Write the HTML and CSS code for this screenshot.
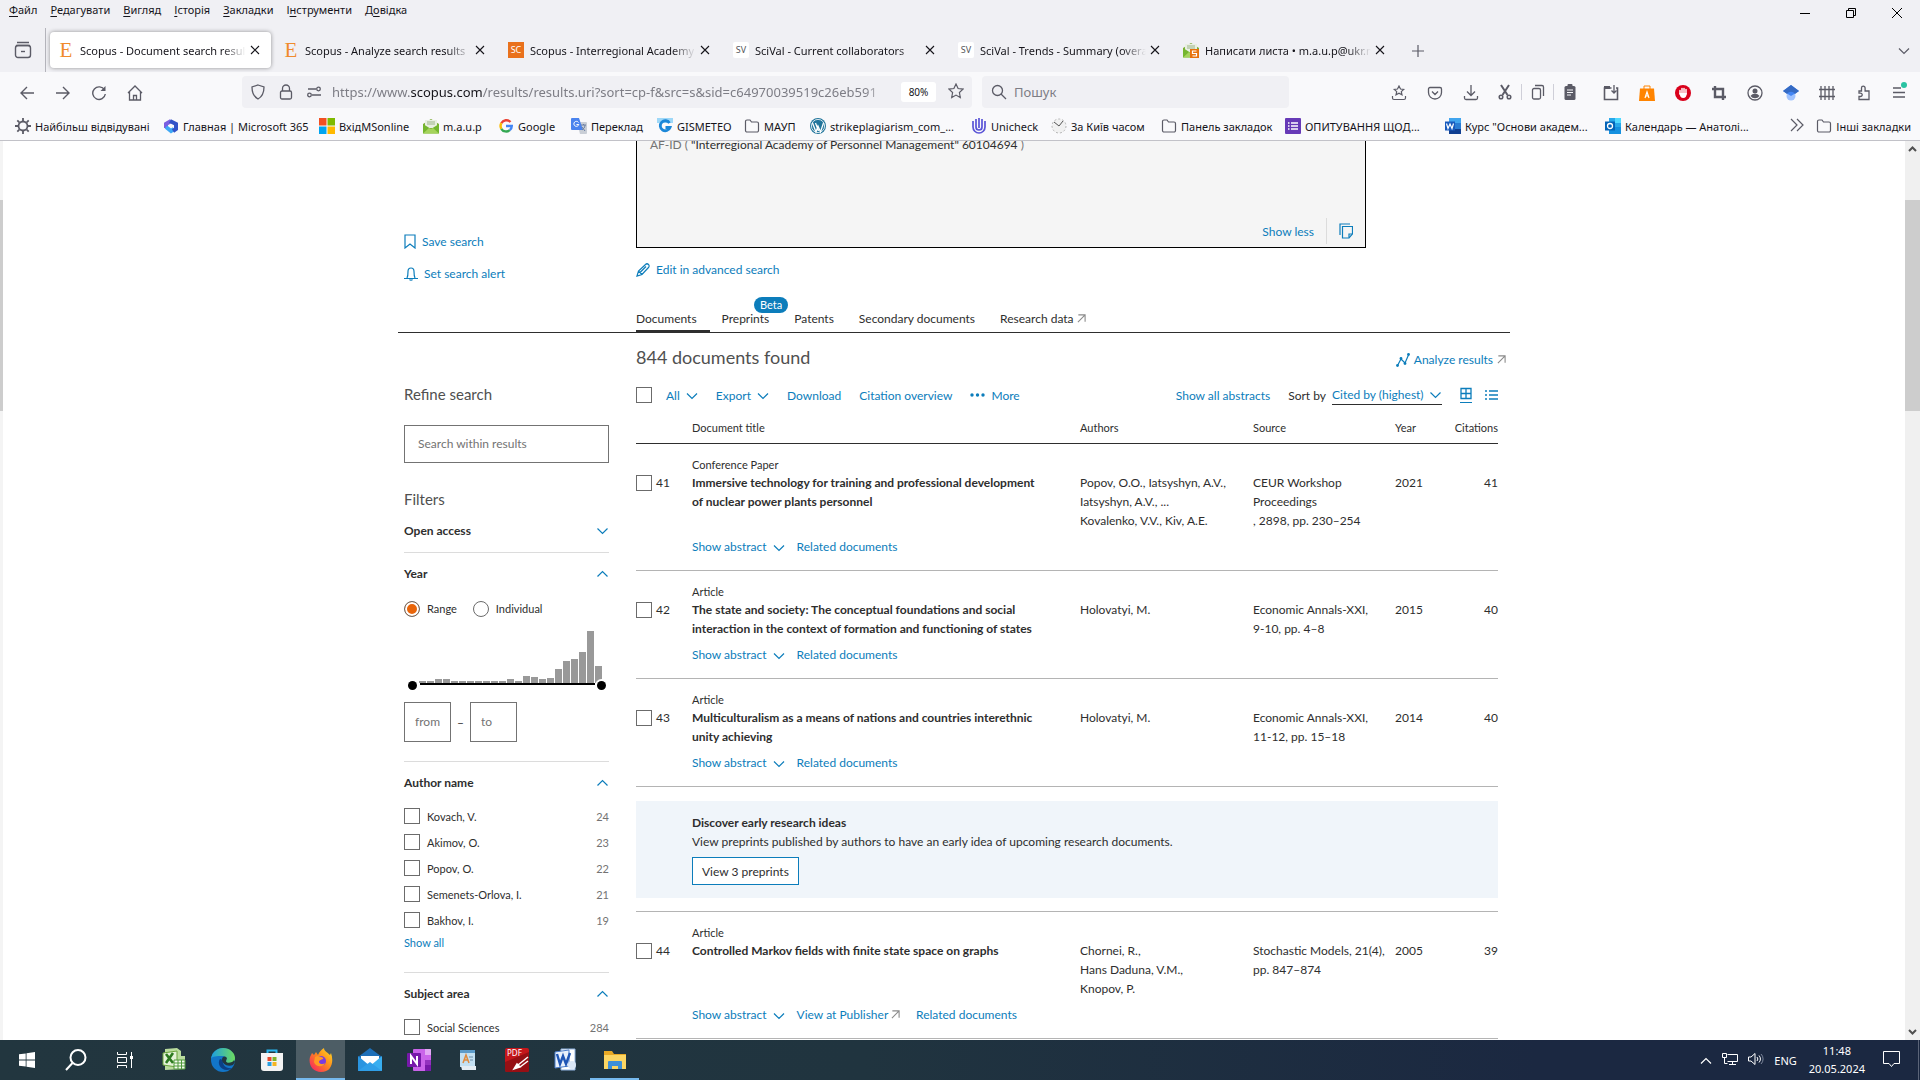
FILE: index.html
```html
<!DOCTYPE html>
<html lang="uk">
<head>
	<meta charset="UTF-8">
	<meta name="viewport" content="width=device-width, initial-scale=1.0">
	<title>Scopus - Document search results</title>
	<link rel="stylesheet" href="styles.css">
</head>
<body>
	<svg class="defs" width="0" height="0">
		<symbol id="chev" viewBox="0 0 12 8"><path d="M1 1.5l5 5 5-5" fill="none" stroke="currentColor" stroke-width="1.2"/></symbol>
		<symbol id="chev-up" viewBox="0 0 12 8"><path d="M1 6.5l5-5 5 5" fill="none" stroke="currentColor" stroke-width="1.2"/></symbol>
		<symbol id="ext" viewBox="0 0 10 10"><path d="M1.500 1h7.500v7.500M9 1L1 9" fill="none" stroke="#8a8a8a" stroke-width="1.2"/></symbol>
		<symbol id="close" viewBox="0 0 10 10"><path d="M1 1l8 8M9 1L1 9" fill="none" stroke="#15141a" stroke-width="1.1"/></symbol>
		<symbol id="folder" viewBox="0 0 16 16"><path d="M1.500 3.500a1.500 1.500 0 0 1 1.500-1.500h3l1.500 2H13a1.500 1.500 0 0 1 1.500 1.500v7A1.500 1.500 0 0 1 13 14H3a1.500 1.500 0 0 1-1.500-1.500z" fill="none" stroke="#5b5b66" stroke-width="1.2"/></symbol>
		<symbol id="mailbox" viewBox="0 0 16 16"><path d="M0 6l8-5 8 5v9H0z" fill="#7fae3a"/><path d="M2 2h12v8H2z" fill="#e9efe2"/><path d="M4 4h8M4 6h8" stroke="#9db58a"/><path d="M0 6l8 5 8-5v9.500H0z" fill="#74b62e"/><path d="M0 15.500l6-5.500 2 1 2-1 6 5.500z" fill="#a5d35c"/></symbol>
	</svg>

	<header class="browser">
		<div class="titlebar">
			<nav class="menu">
				<button><u>Ф</u>айл</button>
				<button><u>Р</u>едагувати</button>
				<button><u>В</u>игляд</button>
				<button><u>І</u>сторія</button>
				<button><u>З</u>акладки</button>
				<button>І<u>н</u>струменти</button>
				<button>Д<u>о</u>відка</button>
			</nav>
			<div class="win-buttons">
				<button aria-label="Згорнути"><svg width="12" height="12"><path d="M1 6.500h10" stroke="#000"/></svg></button>
				<button aria-label="Відновити"><svg width="12" height="12" fill="none" stroke="#000"><path d="M1.500 3.500h7v7h-7zM3.500 3.500v-2h7v7h-2"/></svg></button>
				<button aria-label="Закрити"><svg width="12" height="12"><path d="M1 1l10 10M11 1L1 11" stroke="#000"/></svg></button>
			</div>
		</div>

		<div class="tabstrip">
			<button class="recent" aria-label="Огляд"><svg width="18" height="18" fill="none" stroke="#5b5b66" stroke-width="1.400"><path d="M3 1.500h12M2 4.500h14"/><rect x="1.500" y="4.500" width="15" height="12" rx="2.500"/><path d="M7 10.500h4"/></svg></button>
			<div class="tab active"><span class="fav elsevier">E</span><span class="tab-title">Scopus - Document search results</span><button aria-label="Закрити"><svg width="10" height="10"><use href="#close"/></svg></button></div>
			<div class="tab"><span class="fav elsevier">E</span><span class="tab-title">Scopus - Analyze search results</span><button aria-label="Закрити"><svg width="10" height="10"><use href="#close"/></svg></button></div>
			<div class="tab"><span class="fav sc">SC</span><span class="tab-title">Scopus - Interregional Academy</span><button aria-label="Закрити"><svg width="10" height="10"><use href="#close"/></svg></button></div>
			<div class="tab"><span class="fav sv">SV</span><span class="tab-title">SciVal - Current collaborators</span><button aria-label="Закрити"><svg width="10" height="10"><use href="#close"/></svg></button></div>
			<div class="tab"><span class="fav sv">SV</span><span class="tab-title">SciVal - Trends - Summary (overall)</span><button aria-label="Закрити"><svg width="10" height="10"><use href="#close"/></svg></button></div>
			<div class="tab"><span class="fav"><svg width="16" height="16" viewBox="0 0 16 16"><use href="#mailbox"/><path d="M7 7h9v9H7z" fill="#e8720c"/><path d="M13.500 9h-4v2.500h4V14h-4" fill="none" stroke="#fff" stroke-width="1.200"/></svg></span><span class="tab-title">Написати листа • m.a.u.p@ukr.net</span><button aria-label="Закрити"><svg width="10" height="10"><use href="#close"/></svg></button></div>
			<button class="new-tab" aria-label="Нова вкладка"><svg width="12" height="12"><path d="M6 0v12M0 6h12" stroke="#5b5b66" stroke-width="1.200"/></svg></button>
			<button class="all-tabs" aria-label="Усі вкладки"><svg width="12" height="8" color="#5b5b66"><use href="#chev"/></svg></button>
		</div>

		<div class="navbar">
			<button class="tool" aria-label="Назад"><svg width="16" height="16" fill="none" stroke="#5b5b66" stroke-width="1.400"><path d="M15 8H2M8 2L2 8l6 6"/></svg></button>
			<button class="tool" aria-label="Вперед"><svg width="16" height="16" fill="none" stroke="#5b5b66" stroke-width="1.400"><path d="M1 8h13M8 2l6 6-6 6"/></svg></button>
			<button class="tool" aria-label="Оновити"><svg width="16" height="16" fill="none" stroke="#5b5b66" stroke-width="1.400"><path d="M13.500 5A6.300 6.300 0 1 0 14.300 9"/><path d="M14.500 1v5h-5z" fill="#5b5b66" stroke="none"/></svg></button>
			<button class="tool" aria-label="Додому"><svg width="16" height="16" fill="none" stroke="#5b5b66" stroke-width="1.300"><path d="M1 8l7-7 7 7M2.500 7v8h11V7M6.500 15v-4.500h3V15"/></svg></button>
			<div class="urlbar">
				<svg width="16" height="16" fill="none" stroke="#5b5b66" stroke-width="1.300"><path d="M8 1l6 2c0 6-1.500 9.500-6 12C3.500 12.500 2 9 2 3z"/></svg>
				<svg width="16" height="16" fill="none" stroke="#5b5b66" stroke-width="1.300"><rect x="2.500" y="7" width="11" height="8" rx="1.500"/><path d="M4.500 7V4.500a3.500 3.500 0 0 1 7 0V7"/></svg>
				<svg width="16" height="16" fill="none" stroke="#5b5b66" stroke-width="1.300"><path d="M2 5h8M6 11h9"/><circle cx="12.500" cy="5" r="1.800"/><circle cx="3.500" cy="11" r="1.800"/></svg>
				<div class="url" role="textbox" aria-label="Адреса" contenteditable="true" spellcheck="false">https://www.<span class="domain">scopus.com</span>/results/results.uri?sort=cp-f&amp;src=s&amp;sid=c64970039519c26eb591</div>
				<button class="zoom">80%</button>
				<button class="star" aria-label="Додати до закладок"><svg width="16" height="16" fill="none" stroke="#5b5b66" stroke-width="1.200"><path d="M8 1l2.100 4.500 4.900.6-3.600 3.400.9 5L8 12.100l-4.300 2.400.9-5L1 6.100l4.900-.6z"/></svg></button>
			</div>
			<label class="searchbar">
				<svg width="16" height="16" fill="none" stroke="#5b5b66" stroke-width="1.300"><circle cx="6.500" cy="6.500" r="5"/><path d="M10 10l5 5"/></svg>
				<input type="text" placeholder="Пошук" aria-label="Пошук">
			</label>
			<div class="toolbar-right">
				<button class="tool" aria-label="Закладки"><svg width="16" height="16" fill="none" stroke="#5b5b66" stroke-width="1.200"><path d="M8 1l1.500 3 3.200.4-2.400 2.200.7 3.300L8 8.300 5 9.900l.7-3.300-2.400-2.200L6.500 4zM1.500 11v2a1.500 1.500 0 0 0 1.500 1.500h10a1.500 1.500 0 0 0 1.500-1.500v-2"/></svg></button>
				<button class="tool" aria-label="Pocket"><svg width="16" height="16" fill="none" stroke="#5b5b66" stroke-width="1.300"><path d="M3 2.500h10A1.500 1.500 0 0 1 14.500 4v3.500a6.500 6.500 0 0 1-13 0V4A1.500 1.500 0 0 1 3 2.500zM5 6.500l3 3 3-3"/></svg></button>
				<button class="tool" aria-label="Завантаження"><svg width="16" height="16" fill="none" stroke="#5b5b66" stroke-width="1.300"><path d="M8 0v10M4 6.500L8 10.500l4-4M1.500 11v2a1.500 1.500 0 0 0 1.500 1.500h10a1.500 1.500 0 0 0 1.500-1.500v-2"/></svg></button>
				<div class="edit-group">
					<button aria-label="Вирізати"><svg width="16" height="16" fill="none" stroke="#5b5b66" stroke-width="2"><path d="M4 1l6.500 10M12 1L5.500 11"/><circle cx="4" cy="13" r="1.800" stroke-width="1.500"/><circle cx="12" cy="13" r="1.800" stroke-width="1.500"/></svg></button>
					<button aria-label="Копіювати"><svg width="16" height="16" fill="none" stroke="#5b5b66" stroke-width="1.300"><rect x="2.500" y="4.500" width="8" height="10.500" rx="1.500"/><path d="M5 1.500h7A1.500 1.500 0 0 1 13.500 3v9"/></svg></button>
					<button aria-label="Вставити"><svg width="16" height="16"><rect x="2.500" y="2" width="11" height="14" rx="1.500" fill="#5b5b66"/><rect x="5.500" y="0" width="5" height="4" rx="1" fill="#5b5b66"/><path d="M5 6h6M5 8.500h6M5 11h4" stroke="#f9f9fb"/></svg></button>
				</div>
				<button class="tool" aria-label="Знімки"><svg width="16" height="16" fill="none" stroke="#5b5b66" stroke-width="1.600"><path d="M8.500 3H1.500v11.500h13V3H13"/><path d="M1 2.500h6" stroke-width="3"/><path d="M11 0v8M8.500 5.500L11 8l2.500-2.500" stroke-width="1.300"/></svg></button>
				<button class="tool" aria-label="Розширення A"><svg width="16" height="16"><path d="M1 3.500h14L16 16H0z" fill="#ff8400"/><path d="M5 4V1h6v3" fill="none" stroke="#ff8400"/><path d="M6 13l2-6 2 6M6.700 11h2.600" fill="none" stroke="#fff" stroke-width="1.200"/></svg></button>
				<button class="tool" aria-label="Блокувальник"><svg width="16" height="16"><circle cx="8" cy="8" r="8" fill="#d9001b"/><path d="M5 9V5.500M7 8V3.500M9 8V3.500M11 9V4.500" stroke="#fff" stroke-width="1.500" stroke-linecap="round"/><path d="M4.300 8h7.500c0 3-1.300 5-3.500 5-2.500 0-3.500-2-4-5z" fill="#fff"/></svg></button>
				<button class="tool" aria-label="Знімок екрана"><svg width="16" height="16" fill="none" stroke="#5b5b66" stroke-width="2.400"><path d="M4 1v11h11M1 4h11v11"/></svg></button>
				<button class="tool" aria-label="Обліковий запис"><svg width="16" height="16"><circle cx="8" cy="8" r="7" fill="none" stroke="#5b5b66" stroke-width="1.300"/><circle cx="8" cy="6" r="2.500" fill="#5b5b66"/><path d="M3.500 11a5 4 0 0 1 9 0 5.500 5.500 0 0 1-9 0z" fill="#5b5b66"/></svg></button>
				<button class="tool" aria-label="Scholar"><svg width="16" height="16"><circle cx="8" cy="11" r="4.500" fill="#a0c3ff"/><path d="M8 0l8 6-8 5-8-5z" fill="#4285f4"/><path d="M8 0l8 6-4 3c-2-3-6-3-8 0L0 6z" fill="#356ac3"/></svg></button>
				<button class="tool" aria-label="Паркан"><svg width="16" height="16" fill="none" stroke="#5b5b66" stroke-width="1.300"><path d="M2 1v14M6 1v14M10 1v14M14 1v14M0 4.500h16M0 11.500h16"/></svg></button>
				<button class="tool" aria-label="Розширення"><svg width="16" height="16" fill="none" stroke="#5b5b66" stroke-width="1.300"><path d="M4 6h2.500V3a1.800 1.800 0 0 1 3.600 0v3H14v8.500H4v-3h1.500a1.700 1.700 0 0 0 0-3.400H4z"/></svg></button>
				<button class="tool" aria-label="Меню"><svg width="16" height="20"><path d="M2 6h8M2 10.500h12M2 15h12" stroke="#5b5b66" stroke-width="1.300"/><circle cx="13" cy="3" r="3" fill="#2ac3a2"/></svg></button>
			</div>
		</div>

		<nav class="bookmarks">
			<a href="#"><svg width="16" height="16"><circle cx="8" cy="8" r="4.500" fill="none" stroke="#5b5b66" stroke-width="1.800"/><path d="M8 0v3M8 13v3M0 8h3M13 8h3M2.300 2.300l2 2M11.700 11.700l2 2M2.300 13.700l2-2M11.700 4.300l2-2" stroke="#5b5b66" stroke-width="1.800"/></svg>Найбільш відвідувані</a>
			<a href="#"><svg width="16" height="16" fill="none" stroke-width="4"><path d="M8 3L3 6v4" stroke="#7b5fe0"/><path d="M3 9l5 4 3-2" stroke="#3fa8f5"/><path d="M7 3l6 3v5l-3 2" stroke="#3253c8"/></svg>Главная | Microsoft 365</a>
			<a href="#"><svg width="16" height="16"><path d="M0 0h7.500v7.500H0z" fill="#f25022"/><path d="M8.500 0H16v7.500H8.500z" fill="#7fba00"/><path d="M0 8.500h7.500V16H0z" fill="#00a4ef"/><path d="M8.500 8.500H16V16H8.500z" fill="#ffb900"/></svg>ВхідMSonline</a>
			<a href="#"><svg width="16" height="16"><use href="#mailbox"/></svg>m.a.u.p</a>
			<a href="#"><svg width="16" height="16" fill="none" stroke-width="2.400"><path d="M12.500 4A5.700 5.700 0 0 0 3.300 5.200" stroke="#ea4335"/><path d="M3.300 5.200a5.700 5.700 0 0 0 0 5.600" stroke="#fbbc05"/><path d="M3.300 10.800a5.700 5.700 0 0 0 8.500 1.400" stroke="#34a853"/><path d="M11.800 12.200A5.700 5.700 0 0 0 13.800 8H8" stroke="#4285f4"/></svg>Google</a>
			<a href="#"><svg width="16" height="16"><path d="M6 4h9a1 1 0 0 1 1 1v10a1 1 0 0 1-1 1H9z" fill="#c9ced6"/><path d="M1 0h7l4 12H1a1 1 0 0 1-1-1V1a1 1 0 0 1 1-1z" fill="#4a83ee"/><path d="M7.500 4.500a2.500 2.500 0 1 0 .3 2H5.500" fill="none" stroke="#fff"/><path d="M10 7h5M12.500 6v1M14 7c0 3-2 4-3 5M11 9l3 4" fill="none" stroke="#6b7fa3"/></svg>Переклад</a>
			<a href="#"><svg width="16" height="16"><path d="M0 0h16v5H0z" fill="#9ed8f8"/><path d="M12.500 5A5 5 0 1 0 13 9.500H8.500" fill="none" stroke="#1c87d8" stroke-width="2.800"/></svg>GISMETEO</a>
			<a href="#"><svg width="16" height="16"><use href="#folder"/></svg>МАУП</a>
			<a href="#"><svg width="16" height="16"><circle cx="8" cy="8" r="8" fill="#21759b"/><circle cx="8" cy="8" r="6.600" fill="none" stroke="#fff" stroke-width=".8"/><path d="M2.500 5l3.500 9L8 8l2.500 6L13.500 5M5.500 5l3 8" fill="none" stroke="#fff" stroke-width="1.300"/></svg>strikeplagiarism_com_...</a>
			<a href="#"><svg width="16" height="16" fill="none" stroke="#5a54d6" stroke-width="1.700"><path d="M2 3v6a6 6 0 0 0 12 0V3M5 1v8a3 3 0 0 0 6 0V1M8 0v10"/></svg>Unicheck</a>
			<a href="#"><svg width="16" height="16"><circle cx="8" cy="8" r="7" fill="#f1f1f1" stroke="#b5b5b5" stroke-dasharray="2 2"/><path d="M3 4l5 4 4-5" fill="none" stroke="#555"/></svg>За Київ часом</a>
			<a href="#"><svg width="16" height="16"><use href="#folder"/></svg>Панель закладок</a>
			<a href="#"><svg width="16" height="16"><rect width="16" height="16" rx="1" fill="#673ab7"/><path d="M6 5h7M6 8h7M6 11h7M3 5h1.500M3 8h1.500M3 11h1.500" stroke="#fff" stroke-width="1.500"/></svg>ОПИТУВАННЯ ЩОД...</a>
			<a href="#"><svg width="16" height="16"><path d="M4 0h12v16H4z" fill="#2b7cd3"/><path d="M4 0h12v5H4z" fill="#41a5ee"/><path d="M4 11h12v5H4z" fill="#103f91"/><rect y="3.500" width="10" height="9" fill="#185abd"/><path d="M1.500 5.500l1.500 5L5 6l2 4.500 1.500-5" fill="none" stroke="#fff" stroke-width="1.200"/></svg>Курс "Основи академ...</a>
			<a href="#"><svg width="16" height="16"><path d="M4 0h12v12H4z" fill="#28a8ea"/><path d="M10 0h6v5h-6z" fill="#50d9ff"/><path d="M4 9l12 0v7H4z" fill="#1490df"/><rect y="3.500" width="10" height="9" fill="#0364b8"/><circle cx="5" cy="8" r="2.500" fill="none" stroke="#fff" stroke-width="1.300"/></svg>Календарь — Анатолі...</a>
			<button aria-label="Ще закладки"><svg width="14" height="14" fill="none" stroke="#5b5b66" stroke-width="1.200"><path d="M1 1l6 6-6 6M7 1l6 6-6 6"/></svg></button>
			<a href="#"><svg width="16" height="16"><use href="#folder"/></svg>Інші закладки</a>
		</nav>
	</header>

	<main class="viewport">
		<div class="edge"><span class="thumb"></span></div>
		<div class="scroll-area">
			<div class="page" lang="en">
				<section class="query">
					<div class="query-actions">
						<a href="#"><svg width="12" height="15" fill="none" stroke="currentColor" stroke-width="1.200"><path d="M1 1h10v13l-5-4-5 4z"/></svg>Save search</a>
						<a href="#"><svg width="14" height="15" fill="none" stroke="currentColor" stroke-width="1.200"><path d="M0 12.500h14M3 12c1-2 1-4 1-6.500a3 3.500 0 0 1 6 0c0 2.500 0 4.500 1 6.500M5.500 13.500a1.600 1 0 0 0 3 0"/></svg>Set search alert</a>
					</div>
					<div class="query-main">
						<div class="query-box">
							<p><span>AF-ID ( </span>"Interregional Academy of Personnel Management" 60104694<span> )</span></p>
							<div class="query-foot">
								<button class="link">Show less</button>
								<button class="link copy" aria-label="Copy query"><svg width="14" height="16" fill="none" stroke="currentColor" stroke-width="1.200"><path d="M1 12V1h10"/><path d="M3.500 3.500h10v7.500l-3.500 4H3.500z"/><path d="M13 11h-3v3.500"/></svg></button>
							</div>
						</div>
						<a href="#" class="edit"><svg width="14" height="14" fill="none" stroke="currentColor" stroke-width="1.200"><path d="M1 13l1.500-5L9.500 1.500a1.800 1.800 0 0 1 3 3L6 11.500zM4 9.500l6-6M2.500 8l3.500 3.500"/></svg>Edit in advanced search</a>
					</div>
				</section>

				<nav class="doc-tabs">
					<a href="#" class="current">Documents</a>
					<a href="#">Preprints<span class="beta">Beta</span></a>
					<a href="#">Patents</a>
					<a href="#">Secondary documents</a>
					<a href="#">Research data <svg width="9" height="9"><use href="#ext"/></svg></a>
				</nav>

				<div class="columns">
					<aside class="sidebar">
						<h2>Refine search</h2>
						<input class="within" type="text" placeholder="Search within results" aria-label="Search within results">
						<h2>Filters</h2>

						<section class="facet">
							<button class="facet-head">Open access <svg width="13" height="8"><use href="#chev"/></svg></button>
						</section>

						<section class="facet">
							<button class="facet-head">Year <svg width="13" height="8"><use href="#chev-up"/></svg></button>
							<div class="radios">
								<label><input type="radio" name="year" checked>Range</label>
								<label><input type="radio" name="year">Individual</label>
							</div>
							<div class="histogram">
								<i style="height:2px"></i><i style="height:2px"></i><i style="height:4px"></i><i style="height:4px"></i><i style="height:2px"></i><i style="height:2px"></i><i style="height:2px"></i><i style="height:2px"></i><i style="height:2px"></i><i style="height:2px"></i><i style="height:2px"></i><i style="height:4px"></i><i style="height:2px"></i><i style="height:7px"></i><i style="height:6px"></i><i style="height:4px"></i><i style="height:5px"></i><i style="height:14px"></i><i style="height:22px"></i><i style="height:24px"></i><i style="height:31px"></i><i style="height:52px"></i><i style="height:17px"></i>
							</div>
							<div class="slider">
								<input type="range" min="0" max="22" value="0" aria-label="From year">
								<input type="range" min="0" max="22" value="22" aria-label="To year">
							</div>
							<div class="from-to">
								<input type="text" placeholder="from" aria-label="From">
								<span>–</span>
								<input type="text" placeholder="to" aria-label="To">
							</div>
						</section>

						<section class="facet">
							<button class="facet-head">Author name <svg width="13" height="8"><use href="#chev-up"/></svg></button>
							<ul>
								<li><label><input type="checkbox">Kovach, V.</label><span>24</span></li>
								<li><label><input type="checkbox">Akimov, O.</label><span>23</span></li>
								<li><label><input type="checkbox">Popov, O.</label><span>22</span></li>
								<li><label><input type="checkbox">Semenets-Orlova, I.</label><span>21</span></li>
								<li><label><input type="checkbox">Bakhov, I.</label><span>19</span></li>
							</ul>
							<a href="#" class="show-all">Show all</a>
						</section>

						<section class="facet">
							<button class="facet-head">Subject area <svg width="13" height="8"><use href="#chev-up"/></svg></button>
							<ul>
								<li><label><input type="checkbox">Social Sciences</label><span>284</span></li>
							</ul>
						</section>
					</aside>

					<section class="results">
						<div class="results-head">
							<h1>844 documents found</h1>
							<a href="#" class="analyze"><svg width="14" height="14" fill="none" stroke="currentColor" stroke-width="1.200"><path d="M1.500 12.500L5 6l4 4 3.500-8"/><g fill="currentColor" stroke="none"><circle cx="1.500" cy="12.500" r="1.400"/><circle cx="5" cy="5.500" r="1.400"/><circle cx="9" cy="10.500" r="1.400"/><circle cx="12.500" cy="1.500" r="1.400"/></g></svg>Analyze results <svg class="ext" width="9" height="9"><use href="#ext"/></svg></a>
						</div>
						<div class="actions">
							<input type="checkbox" aria-label="Select all">
							<button class="link">All <svg width="12" height="8"><use href="#chev"/></svg></button>
							<button class="link">Export <svg width="12" height="8"><use href="#chev"/></svg></button>
							<button class="link">Download</button>
							<button class="link">Citation overview</button>
							<button class="link more"><svg width="15" height="4" fill="currentColor"><circle cx="2" cy="2" r="1.700"/><circle cx="7.500" cy="2" r="1.700"/><circle cx="13" cy="2" r="1.700"/></svg>More</button>
							<button class="link abstracts">Show all abstracts</button>
							<label for="sort">Sort by</label>
							<div class="sort">
								<select id="sort"><option>Cited by (highest)</option><option>Date (newest)</option></select>
								<svg width="13" height="8"><use href="#chev"/></svg>
							</div>
							<button class="link view on" aria-label="Grid view"><svg width="12" height="13" fill="none" stroke="currentColor" stroke-width="1.300"><path d="M1 1.500h10v10H1zM6 1.500v10M1 6.500h10"/></svg></button>
							<button class="link view" aria-label="List view"><svg width="13" height="12" fill="none" stroke="currentColor" stroke-width="1.300"><path d="M4 2h9M4 6h9M4 10h9M0 2h2M0 6h2M0 10h2"/></svg></button>
						</div>

						<table>
							<colgroup>
								<col class="c-check"><col class="c-title"><col class="c-authors"><col class="c-source"><col class="c-year"><col class="c-cited">
							</colgroup>
							<thead>
								<tr><th></th><th>Document title</th><th>Authors</th><th>Source</th><th>Year</th><th>Citations</th></tr>
							</thead>
							<tbody>
								<tr class="type"><td></td><td colspan="5">Conference Paper</td></tr>
								<tr class="doc">
									<td><label><input type="checkbox">41</label></td>
									<td><b>Immersive technology for training and professional development<br>of nuclear power plants personnel</b></td>
									<td>Popov, O.O., Iatsyshyn, A.V.,<br>Iatsyshyn, A.V., ...<br>Kovalenko, V.V., Kiv, A.E.</td>
									<td>CEUR Workshop<br>Proceedings<br>, 2898, pp. 230–254</td>
									<td>2021</td>
									<td>41</td>
								</tr>
								<tr class="tools"><td></td><td colspan="5"><button class="link">Show abstract <svg width="12" height="8"><use href="#chev"/></svg></button><a href="#">Related documents</a></td></tr>
							</tbody>
							<tbody>
								<tr class="type"><td></td><td colspan="5">Article</td></tr>
								<tr class="doc">
									<td><label><input type="checkbox">42</label></td>
									<td><b>The state and society: The conceptual foundations and social<br>interaction in the context of formation and functioning of states</b></td>
									<td>Holovatyi, M.</td>
									<td>Economic Annals-XXI,<br>9-10, pp. 4–8</td>
									<td>2015</td>
									<td>40</td>
								</tr>
								<tr class="tools"><td></td><td colspan="5"><button class="link">Show abstract <svg width="12" height="8"><use href="#chev"/></svg></button><a href="#">Related documents</a></td></tr>
							</tbody>
							<tbody>
								<tr class="type"><td></td><td colspan="5">Article</td></tr>
								<tr class="doc">
									<td><label><input type="checkbox">43</label></td>
									<td><b>Multiculturalism as a means of nations and countries interethnic<br>unity achieving</b></td>
									<td>Holovatyi, M.</td>
									<td>Economic Annals-XXI,<br>11-12, pp. 15–18</td>
									<td>2014</td>
									<td>40</td>
								</tr>
								<tr class="tools"><td></td><td colspan="5"><button class="link">Show abstract <svg width="12" height="8"><use href="#chev"/></svg></button><a href="#">Related documents</a></td></tr>
							</tbody>
							<tbody>
								<tr class="promo"><td colspan="6">
									<div class="banner">
										<b>Discover early research ideas</b>
										<p>View preprints published by authors to have an early idea of upcoming research documents.</p>
										<button>View 3 preprints</button>
									</div>
								</td></tr>
							</tbody>
							<tbody>
								<tr class="type"><td></td><td colspan="5">Article</td></tr>
								<tr class="doc">
									<td><label><input type="checkbox">44</label></td>
									<td><b>Controlled Markov fields with finite state space on graphs</b></td>
									<td>Chornei, R.,<br>Hans Daduna, V.M.,<br>Knopov, P.</td>
									<td>Stochastic Models, 21(4),<br>pp. 847–874</td>
									<td>2005</td>
									<td>39</td>
								</tr>
								<tr class="tools"><td></td><td colspan="5"><button class="link">Show abstract <svg width="12" height="8"><use href="#chev"/></svg></button><a href="#">View at Publisher <svg width="9" height="9"><use href="#ext"/></svg></a><a href="#">Related documents</a></td></tr>
							</tbody>
						</table>
					</section>
				</div>
			</div>
		</div>
		<div class="scrollbar">
			<svg width="9" height="6" fill="none" stroke="#505050" stroke-width="2"><path d="M1 5l3.500-3.500L8 5"/></svg>
			<span class="thumb"></span>
			<svg width="9" height="6" fill="none" stroke="#505050" stroke-width="2"><path d="M1 1l3.500 3.500L8 1"/></svg>
		</div>
	</main>

	<footer class="taskbar">
		<button class="app" aria-label="Пуск"><svg width="16" height="16" fill="#fff"><path d="M0 2.300L6.700 1.400V7.600H0zM7.500 1.300L16 0v7.600H7.500zM0 8.400h6.700v6.200L0 13.700zM7.500 8.400H16V16l-8.500-1.200z"/></svg></button>
		<button class="app" aria-label="Пошук"><svg width="22" height="22" fill="none" stroke="#fff" stroke-width="2"><circle cx="13" cy="8.500" r="7.500"/><path d="M7.500 14L1 21"/></svg></button>
		<button class="app" aria-label="Подання завдань"><svg width="18" height="16" fill="none" stroke="#fff"><path d="M1.500 0v2.500h9V0M1.500 5.500h9v5h-9zM1.500 16v-2.500h9V16M15.500 0v4M15.500 7v9"/><path d="M14 5.500h3" stroke-width="3"/></svg></button>
		<button class="app" aria-label="Excel"><svg width="24" height="24"><path d="M3 1l12-1 4 3v5h4v13l-20 1z" fill="#b9dc9d"/><path d="M1 5l14-2v16L1 17z" fill="#e4f2d7"/><path d="M1 5l14-2v16L1 17z" fill="none" stroke="#6ba33c"/><path d="M12 12h11v9H12z" fill="#f4faef" stroke="#4e9a3a"/><path d="M12 15h11M12 18h11M16 12v9M19.500 12v9" stroke="#4e9a3a"/><path d="M4 6l7 9M11 5L4 15" stroke="#2c7a1f" stroke-width="2.600"/></svg></button>
		<button class="app" aria-label="Edge"><svg width="24" height="24"><defs><linearGradient id="eg" x1="0" x2="1"><stop offset="0" stop-color="#1b9de2"/><stop offset="1" stop-color="#6edc5f"/></linearGradient></defs><circle cx="12" cy="12" r="12" fill="#1275c8"/><path d="M0 11C1 4 6 0 12 0c7 0 12 5 12 10 0 4-3 6-6 6-3 0-4-1-3-3 1-3-1-5-4-5C6 8 1 8 0 11z" fill="url(#eg)"/><path d="M9 11c-3 4 0 11 7 11 2 0 4-1 5-2-6 1-10-3-9-8z" fill="#0b3f86"/><path d="M11 11c0 5 5 8 11 6l2-3-1-2c-1 3-8 4-8 1l1-3c-2-2-4-2-5 1z" fill="#21363f"/></svg></button>
		<button class="app" aria-label="Microsoft Store"><svg width="24" height="24"><path d="M7.500 7V2.500h9V7" fill="none" stroke="#29b6f0" stroke-width="2"/><path d="M1 5h22v15a3 3 0 0 1-3 3H4a3 3 0 0 1-3-3z" fill="#f3f3f3"/><path d="M7.500 9h4v4h-4z" fill="#e8482b"/><path d="M12.500 9h4v4h-4z" fill="#7db52b"/><path d="M7.500 14h4v4h-4z" fill="#2a9fe0"/><path d="M12.500 14h4v4h-4z" fill="#f5b521"/></svg></button>
		<button class="app focus" aria-label="Firefox"><svg width="24" height="24"><defs><linearGradient id="fx" x1="1" y1="0" x2="0" y2="1"><stop offset="0" stop-color="#ffe226"/><stop offset=".45" stop-color="#ff8a1c"/><stop offset="1" stop-color="#f5156c"/></linearGradient></defs><path d="M3 5l2 2 2-3 2 3c1-3 3-5 6-7 0 3 3 4 6 7l1-2c3 8 1 19-10 19C4 24-1 17 1 9z" fill="url(#fx)"/><circle cx="12" cy="13" r="5" fill="#7a3be0"/><path d="M6 9c3-2 5 0 6 0s3 1 2 2c-2 1-4 1-4 3s4 3 6 1c-1 4-9 5-11-1z" fill="#ff9a24"/></svg></button>
		<button class="app" aria-label="Пошта"><svg width="24" height="24"><path d="M0 9l12-9 12 9v14H0z" fill="#1d6fb8"/><path d="M3 8h18v10H3z" fill="#fff"/><path d="M0 8l12 10L0 23z" fill="#2a95e0"/><path d="M24 8L12 18l12 5z" fill="#38aef0"/><path d="M0 23l12-9 12 9z" fill="#2f9fe8"/></svg></button>
		<button class="app" aria-label="OneNote"><svg width="24" height="24"><rect x="6" y="1" width="18" height="22" rx="1" fill="#ca64ea"/><path d="M18 1h5a1 1 0 0 1 1 1v5h-6z" fill="#e3a8f5"/><path d="M18 12h6v5h-6z" fill="#9332bf"/><path d="M18 17h6v6h-6z" fill="#7719aa"/><rect y="5" width="14" height="14" rx="1" fill="#7719aa"/><path d="M4 16V8l6 8V8" fill="none" stroke="#fff" stroke-width="2"/></svg></button>
		<button class="app" aria-label="WordPad"><svg width="18" height="22"><path d="M1 1h15v17H1z" fill="#c3e0f2"/><path d="M1 1h15v3H1z" fill="#5c9bc9"/><path d="M2 17h15v4H3z" fill="#e5edf3"/><path d="M4 14l3-8 3 8M5 11h4" fill="none" stroke="#e08a3c" stroke-width="1.500"/><path d="M10 8h4M11 11h3" stroke="#6a8ca8"/></svg></button>
		<button class="app" aria-label="PDF"><svg width="24" height="24"><rect width="24" height="24" rx="2" fill="#c4161b"/><path d="M0 14L24 4v18a2 2 0 0 1-2 2H2a2 2 0 0 1-2-2z" fill="#960f14"/><text x="2" y="8" class="pdf">PDF</text><path d="M23 9L13 17M23 13l-8 6M9 21l3-5 3 3z" stroke="#fff" stroke-width="1.500" fill="#fff"/></svg></button>
		<button class="app" aria-label="Word"><svg width="24" height="24"><path d="M7 1h14v21H7z" fill="#fff" stroke="#8fb2e0"/><path d="M1 4l14-2v16L1 20z" fill="#e8f0fb" stroke="#4a7cc9"/><path d="M3 6l3 10 3-8 3 8 4-11" fill="none" stroke="#1f56b5" stroke-width="2.400"/><circle cx="18" cy="17" r="4" fill="#dbe7f7"/></svg></button>
		<button class="app open" aria-label="Провідник"><svg width="22" height="22"><path d="M0 2h8l2 3h12v15H0z" fill="#e9a925"/><path d="M0 6h22v14H0z" fill="#fdd663"/><path d="M4 20v-7a1 1 0 0 1 1-1h12a1 1 0 0 1 1 1v7h-4v-3H8v3z" fill="#3f8fd8"/></svg></button>

		<div class="tray">
			<button aria-label="Приховані піктограми"><svg width="12" height="8" color="#fff"><use href="#chev-up"/></svg></button>
			<button aria-label="Мережа"><svg width="16" height="14" fill="none" stroke="#fff"><path d="M5.500 2.500h10v7h-10M10.500 9.500v3M7 12.500h7M.5 1.500h4v4h-4zM2.500 5.500v6h3"/></svg></button>
			<button aria-label="Гучність"><svg width="16" height="14" fill="none" stroke="#fff"><path d="M.5 5v4h2.500l4 3.500v-11L3 5zM9 5a3 3 0 0 1 0 4M11 3.500a5 5 0 0 1 0 7"/><path d="M13 2a7 7 0 0 1 0 10" stroke="#7c869a"/></svg></button>
			<button>ENG</button>
			<div class="clock"><time>11:48</time><time>20.05.2024</time></div>
			<button aria-label="Сповіщення"><svg width="17" height="16" fill="none" stroke="#fff"><path d="M.5.5h16v12H11l-2.500 3-2.500-3H.5z"/></svg></button>
		</div>
	</footer>
</body>
</html>
```
FILE: styles.css
```css
* {
	box-sizing: border-box;
}

body {
	margin: 0;
	height: 100vh;
	display: flex;
	flex-direction: column;
	overflow: hidden;
	font-family: "Noto Sans", sans-serif;
	font-size: 11px;
	color: #15141a;
}

button {
	border: none;
	background: none;
	padding: 0;
	margin: 0;
	font: inherit;
	color: inherit;
	cursor: pointer;
}

a {
	color: inherit;
	text-decoration: none;
}

svg {
	flex: none;
}

.defs {
	position: absolute;
}

/* browser window */
.browser {
	background: #f0f0f4;
	border-bottom: 1px solid #c2c2c8;
}

.titlebar {
	display: flex;
	justify-content: space-between;
	height: 28px;
}

.menu {
	display: flex;
	gap: 13px;
	padding-left: 9px;
	height: 18px;
}

.menu u {
	text-underline-offset: 2px;
}

.win-buttons {
	display: flex;
}

.win-buttons button {
	width: 46px;
}

.tabstrip {
	display: flex;
	align-items: center;
	height: 44px;
}

.recent {
	width: 46px;
	height: 44px;
	padding-top: 3px;
	border-right: 1px solid #b4b4bb;
}

.tab {
	display: flex;
	align-items: center;
	flex: 0 1 221px;
	min-width: 0;
	height: 36px;
	margin: 0 0 0 4px;
	padding: 0 11px 0 8px;
	border-radius: 4px;
}

.tab.active {
	background: #fff;
	box-shadow: 0 0 4px rgba(0, 0, 0, 0.4);
}

.tab-title {
	flex: 1;
	margin: 0 4px 0 6px;
	overflow: hidden;
	white-space: nowrap;
	mask-image: linear-gradient(to left, transparent, #000 24px);
}

.fav {
	width: 16px;
	height: 16px;
	flex: none;
	line-height: 16px;
	text-align: center;
}

.fav svg {
	display: block;
}

.elsevier {
	font-family: "Liberation Serif", serif;
	font-size: 21px;
	color: #f08a2c;
}

.sc,
.sv {
	font-size: 9px;
	color: #fff;
	background: #e9711c;
}

.sv {
	color: #53565a;
	background: #fff;
	border-radius: 2px;
}

.new-tab {
	width: 44px;
	height: 36px;
	padding-top: 4px;
}

.all-tabs {
	width: 32px;
	height: 36px;
	margin-left: auto;
}

.navbar {
	display: flex;
	align-items: center;
	height: 40px;
	padding-left: 9px;
	padding-right: 3px;
	background: #f9f9fb;
}

.tool {
	width: 36px;
	height: 32px;
}

.tool svg {
	vertical-align: middle;
}

.urlbar {
	display: flex;
	align-items: center;
	gap: 12px;
	flex: 0 1 730px;
	min-width: 0;
	height: 32px;
	margin-left: 89px;
	padding: 0 8px;
	border-radius: 4px;
	background: #f0f0f4;
}

.url {
	flex: 1;
	margin-left: -2px;
	overflow: hidden;
	white-space: nowrap;
	font-size: 13px;
	color: #7d7d85;
	mask-image: linear-gradient(to left, transparent, #000 24px);
}

.domain {
	color: #15141a;
}

.zoom {
	width: 35px;
	height: 20px;
	border-radius: 3px;
	background: #fff;
	font-size: 10px;
}

.searchbar {
	display: flex;
	align-items: center;
	gap: 7px;
	flex: 0 1 307px;
	min-width: 0;
	height: 32px;
	margin-left: 10px;
	padding: 0 9px;
	border-radius: 4px;
	background: #f0f0f4;
}

.searchbar input {
	flex: 1;
	min-width: 0;
	padding: 0;
	border: none;
	outline: none;
	background: none;
	font: inherit;
	font-size: 13px;
}

.searchbar input::placeholder {
	color: #7d7d85;
	opacity: 1;
}

.toolbar-right {
	display: flex;
	align-items: center;
	margin-left: auto;
}

.edit-group {
	display: flex;
	margin: 0 8px 0 0;
}

.edit-group button {
	width: 32px;
	height: 16px;
	line-height: 0;
}

.edit-group button + button {
	border-left: 1px solid #cfcfd8;
}

.bookmarks {
	display: grid;
	grid-template-columns: 148px 156px 104px 75px 73px 86px 87px 66px 161px 80px 110px 124px 160px 160px 173px 1fr auto;
	align-items: center;
	height: 28px;
	padding: 0 9px 0 15px;
	background: #f9f9fb;
	white-space: nowrap;
}

.bookmarks a {
	display: flex;
	align-items: center;
	gap: 4px;
}

/* page area */
.viewport {
	flex: 1;
	min-height: 0;
	display: flex;
	background: #fff;
}

.edge {
	width: 3px;
	padding-top: 59px;
	background: #f4f4f4;
}

.scroll-area {
	flex: 1;
	overflow: hidden;
}

.scrollbar {
	width: 15px;
	display: flex;
	flex-direction: column;
	align-items: center;
	padding: 5px 0;
	background: #f0f0f0;
}

.thumb {
	display: block;
	width: 100%;
	height: 211px;
	background: #cdcdcd;
}

.scrollbar .thumb {
	margin: 48px 0 auto;
}

.page {
	max-width: 1112px;
	margin: -7px auto 0;
	font-family: Lato, sans-serif;
	font-size: 12px;
	line-height: 19px;
	color: #2e2e2e;
}

.page p,
.page h1,
.page h2,
.page ul {
	margin: 0;
	padding: 0;
}

.link,
.query-actions a,
.edit,
.analyze,
.show-all,
.tools a {
	color: #0c7dbb;
}

.query {
	display: grid;
	grid-template-columns: 205px minmax(0, 730px);
	gap: 27px;
	padding-left: 6px;
}

.query-actions {
	display: flex;
	flex-direction: column;
	gap: 13px;
	padding-top: 98px;
}

.query-actions a,
.edit {
	display: flex;
	align-items: center;
	gap: 6px;
}

.query-box {
	display: flex;
	flex-direction: column;
	justify-content: space-between;
	height: 114px;
	padding: 0 12px 3px 13px;
	border: 1px solid #000;
	background: #f5f5f5;
}

.query-box span {
	color: #737373;
}

.query-foot {
	display: flex;
	justify-content: flex-end;
	gap: 12px;
}

.copy {
	height: 26px;
	padding-left: 12px;
	border-left: 1px solid #dcdcdc;
	line-height: 0;
}

.edit {
	margin: 12px 0 0;
}

.doc-tabs {
	display: flex;
	gap: 12px;
	height: 26px;
	margin-top: 24px;
	padding-left: 238px;
	border-bottom: 1px solid #2e2e2e;
}

.doc-tabs a {
	position: relative;
	height: 26px;
	padding-right: 13px;
	line-height: 24px;
}

.doc-tabs .current {
	border-bottom: 3px solid #2e2e2e;
}

.beta {
	position: absolute;
	right: -6px;
	top: -10px;
	padding: 0 6px;
	border-radius: 8px;
	background: #0c7dbb;
	color: #fff;
	font-size: 11px;
	line-height: 16px;
}

.columns {
	display: grid;
	grid-template-columns: 205px minmax(0, 1fr);
	gap: 27px;
	padding: 0 12px 0 6px;
}

/* left filters */
.sidebar {
	padding-top: 51px;
}

.sidebar h2 {
	font-size: 15px;
	font-weight: normal;
	line-height: 20px;
	color: #505050;
}

.page input[type="text"] {
	border: 1px solid #737373;
	background: #fff;
	font: inherit;
	color: inherit;
}

.page input::placeholder {
	color: #737373;
	opacity: 1;
}

.within {
	width: 100%;
	height: 38px;
	margin: 21px 0 26px;
	padding: 0 13px 2px;
}

.facet {
	padding-bottom: 19px;
	border-bottom: 1px solid #dcdcdc;
}

.facet:first-of-type {
	padding: 1px 0 12px;
}

.facet-head {
	display: flex;
	justify-content: space-between;
	align-items: center;
	width: 100%;
	padding-top: 11px;
	font-weight: bold;
	line-height: 19px;
}

.facet-head svg {
	color: #0c7dbb;
}

.radios {
	display: flex;
	gap: 16px;
	margin-top: 18px;
	font-size: 11px;
	line-height: 16px;
}

.radios label,
.facet li label,
.doc label {
	display: flex;
	align-items: center;
	gap: 7px;
}

.page input[type="checkbox"],
.page input[type="radio"] {
	appearance: none;
	flex: none;
	width: 16px;
	height: 16px;
	margin: 0;
	border: 1px solid #6b6b6b;
	background: #fff;
}

.page input[type="radio"] {
	border-radius: 50%;
}

.page input[type="radio"]:checked {
	background: #e9650a;
	box-shadow: inset 0 0 0 2px #fff;
}

.page input[type="checkbox"]:checked {
	background: #e9650a;
}

.histogram {
	display: flex;
	align-items: flex-end;
	gap: 1px;
	height: 66px;
	padding-left: 15px;
}

.histogram i {
	width: 7px;
	background: #999;
}

.slider {
	display: grid;
	width: 198px;
	height: 10px;
	margin: -3px 0 12px 4px;
	background: linear-gradient(#000, #000) no-repeat 12px 3px / 175px 2px;
}

.slider input {
	appearance: none;
	grid-area: 1 / 1;
	width: 100%;
	height: 10px;
	margin: 0;
	background: none;
	pointer-events: none;
}

.slider input::-webkit-slider-thumb {
	appearance: none;
	width: 9px;
	height: 9px;
	border-radius: 50%;
	background: #000;
	box-shadow: 0 0 0 2px #fff;
	pointer-events: auto;
}

.from-to {
	display: flex;
	align-items: center;
	gap: 6px;
}

.from-to input {
	width: 47px;
	height: 40px;
	padding: 0 10px 2px;
}

.facet ul {
	margin-top: 11px;
	list-style: none;
	font-size: 11px;
}

.facet li {
	display: flex;
	align-items: center;
	justify-content: space-between;
	height: 26px;
}

.facet li span {
	color: #737373;
}

.show-all {
	display: block;
	margin-bottom: 1px;
	font-size: 11px;
}

/* results */
.results-head {
	display: flex;
	justify-content: space-between;
	align-items: center;
	padding-top: 12px;
	margin-right: -8px;
}

.results-head h1 {
	font-size: 18px;
	font-weight: normal;
	line-height: 24px;
	color: #505050;
}

.analyze {
	display: flex;
	align-items: center;
	padding-top: 5px;
	gap: 4px;
}

.actions {
	display: flex;
	align-items: center;
	gap: 18px;
	height: 26px;
	margin-top: 13px;
}

.actions .link svg {
	margin-left: 3px;
}

.actions input {
	margin-right: -4px;
}

.actions input + .link {
	margin-left: -4px;
}

.actions .more svg {
	margin: 0 6px 3px 0;
}

.actions .abstracts {
	margin-left: auto;
}

.actions label {
	margin-right: -12px;
}

.sort {
	display: flex;
	align-items: center;
	width: 110px;
	border-bottom: 1px solid #2e2e2e;
	color: #0c7dbb;
}

.sort select {
	appearance: none;
	flex: 1;
	min-width: 0;
	padding: 0;
	border: none;
	background: none;
	font: inherit;
	line-height: 19px;
	color: inherit;
}

.view {
	line-height: 0;
}

.actions .view svg {
	margin: 0;
}

.view + .view {
	margin-left: -5px;
}

.on {
	padding-bottom: 2px;
	border-bottom: 1px solid #0c7dbb;
}

table {
	width: 100%;
	table-layout: fixed;
	border-collapse: collapse;
}

.c-check { width: 56px; }
.c-authors { width: 173px; }
.c-source { width: 142px; }
.c-year { width: 50px; }
.c-cited { width: 53px; }

th,
td {
	padding: 0;
	text-align: left;
	vertical-align: top;
	white-space: nowrap;
}

th {
	padding: 10px 0 6px;
	border-bottom: 1px solid #2e2e2e;
	font-size: 11px;
	font-weight: normal;
}

th:last-child,
.doc td:last-child {
	text-align: right;
}

.type td {
	padding-top: 12px;
	font-size: 11px;
	line-height: 17px;
}

.doc label {
	gap: 4px;
}

.tools td {
	padding: 7px 0 14px;
	border-bottom: 1px solid #b4b4b4;
}

.tools button {
	margin-right: 12px;
}

.tools button svg {
	margin: 0 0 -1px 3px;
}

.tools a + a {
	margin-left: 16px;
}

.promo > td {
	padding: 14px 0 13px;
	border-bottom: 1px solid #b4b4b4;
}

.banner {
	padding: 12px 56px 13px;
	background: #f0f5fa;
}

.banner button {
	height: 28px;
	margin-top: 6px;
	padding: 0 9px;
	border: 1px solid #0c7dbb;
	background: #fff;
}

/* taskbar */
.taskbar {
	display: flex;
	height: 40px;
	padding-left: 2px;
	background: linear-gradient(90deg, #22363f, #20343f 45%, #1b2841 80%);
	color: #fff;
}

.app {
	display: flex;
	align-items: center;
	justify-content: center;
	width: 49px;
}

.app.focus {
	background: #4d5d65;
}

.app.focus,
.app.open {
	border-bottom: 2px solid #76b9ed;
	padding-top: 2px;
}

.pdf {
	font: 8px "Noto Sans", sans-serif;
	fill: #fff;
}

.tray {
	display: flex;
	align-items: center;
	gap: 10px;
	margin-left: auto;
	padding-right: 18px;
	margin-right: 1px;
	border-right: 1px solid #5a6478;
}

.clock {
	display: flex;
	flex-direction: column;
	align-items: center;
	margin: 0 8px 0 2px;
	line-height: 18px;
}
```
